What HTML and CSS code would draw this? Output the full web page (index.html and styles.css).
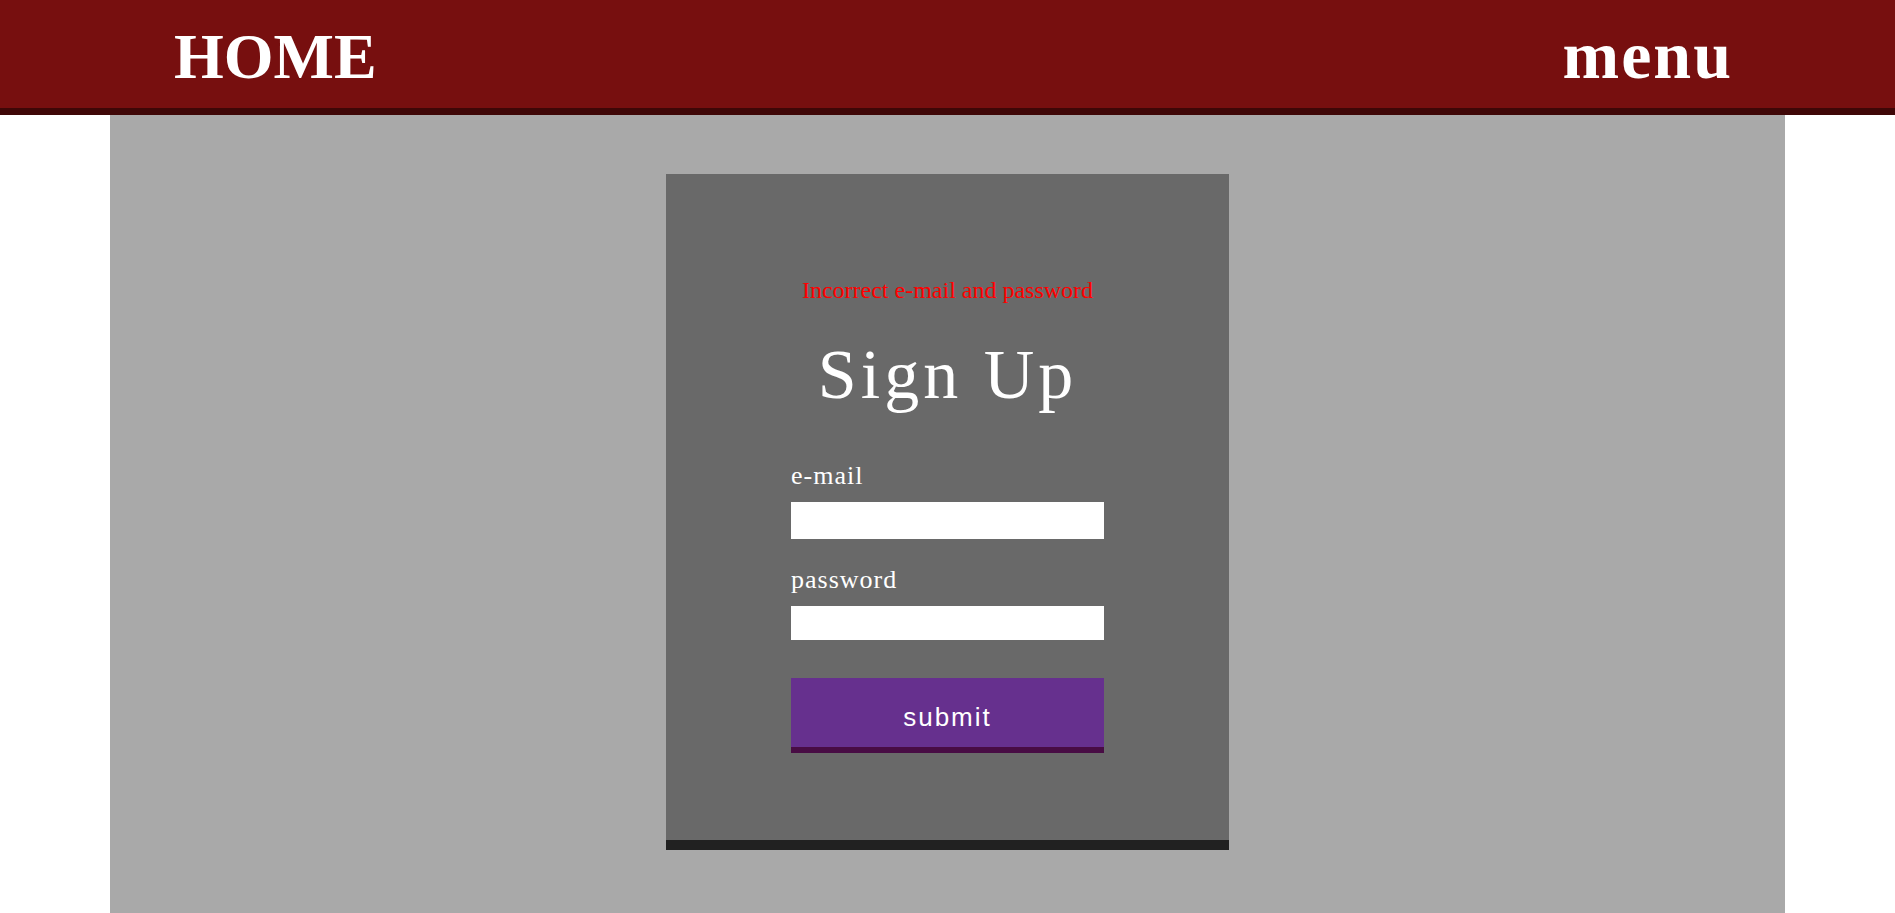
FILE: index.html
```html
<!DOCTYPE html>
<html lang="en">
<head>
<meta charset="utf-8">
<meta name="viewport" content="width=device-width, initial-scale=1">
<title>Sign Up</title>
<link rel="stylesheet" href="styles.css">
</head>
<body>
<header class="header">
  <a class="header-link" href="#home">HOME</a>
  <a class="header-link menu" href="#menu">menu</a>
</header>
<main class="main">
  <form class="card">
    <p class="error">Incorrect e-mail and password</p>
    <h1 class="title">Sign Up</h1>
    <label class="label" for="email">e-mail</label>
    <input class="field email" id="email" type="email">
    <label class="label" for="password">password</label>
    <input class="field password" id="password" type="password">
    <button class="submit" type="button">submit</button>
  </form>
</main>
</body>
</html>
```
FILE: styles.css
```css
* { box-sizing: border-box; }
body {
  margin: 0;
  min-height: 100vh;
  display: flex;
  flex-direction: column;
  background: #fff;
  font-family: "Liberation Serif", serif;
}
.header {
  display: flex;
  justify-content: space-between;
  align-items: baseline;
  padding: 19px 162px 15px 174px;
  background: #770f0f;
  border-bottom: 7px solid #3f0707;
}
.header-link {
  color: #fff;
  font-size: 64px;
  font-weight: 700;
  line-height: 72px;
  text-decoration: none;
}
.menu {
  font-size: 68px;
  letter-spacing: 2px;
}
.main {
  flex: 1;
  width: calc(100% - 220px);
  margin: 0 auto;
  padding: 59px 0 48px;
  background: #a9a9a9;
}
.card {
  display: flex;
  flex-direction: column;
  width: 563px;
  max-width: 100%;
  margin: 0 auto;
  padding: 102px 125px 87px;
  background: #696969;
  border-bottom: 10px solid #212121;
  color: #fff;
}
.error {
  margin: 0;
  color: #f00;
  font-size: 24px;
  line-height: 28px;
  text-align: center;
}
.title {
  margin: 33px 0 48px;
  font-size: 70px;
  font-weight: 400;
  line-height: 76px;
  letter-spacing: 4px;
  text-align: center;
}
.label {
  font-size: 26px;
  line-height: 30px;
  letter-spacing: 1px;
}
.field {
  margin: 11px 0 26px;
  padding: 0 8px;
  border: 0;
  background: #fff;
  font-size: 20px;
}
.email { height: 37px; }
.password { height: 34px; margin-bottom: 38px; }
.submit {
  height: 75px;
  padding: 9px 0 0;
  border: 0;
  border-bottom: 6px solid #480c44;
  background: #66308e;
  color: #fff;
  font-family: "Liberation Sans", Arial, sans-serif;
  font-size: 26px;
  letter-spacing: 2px;
}
```
